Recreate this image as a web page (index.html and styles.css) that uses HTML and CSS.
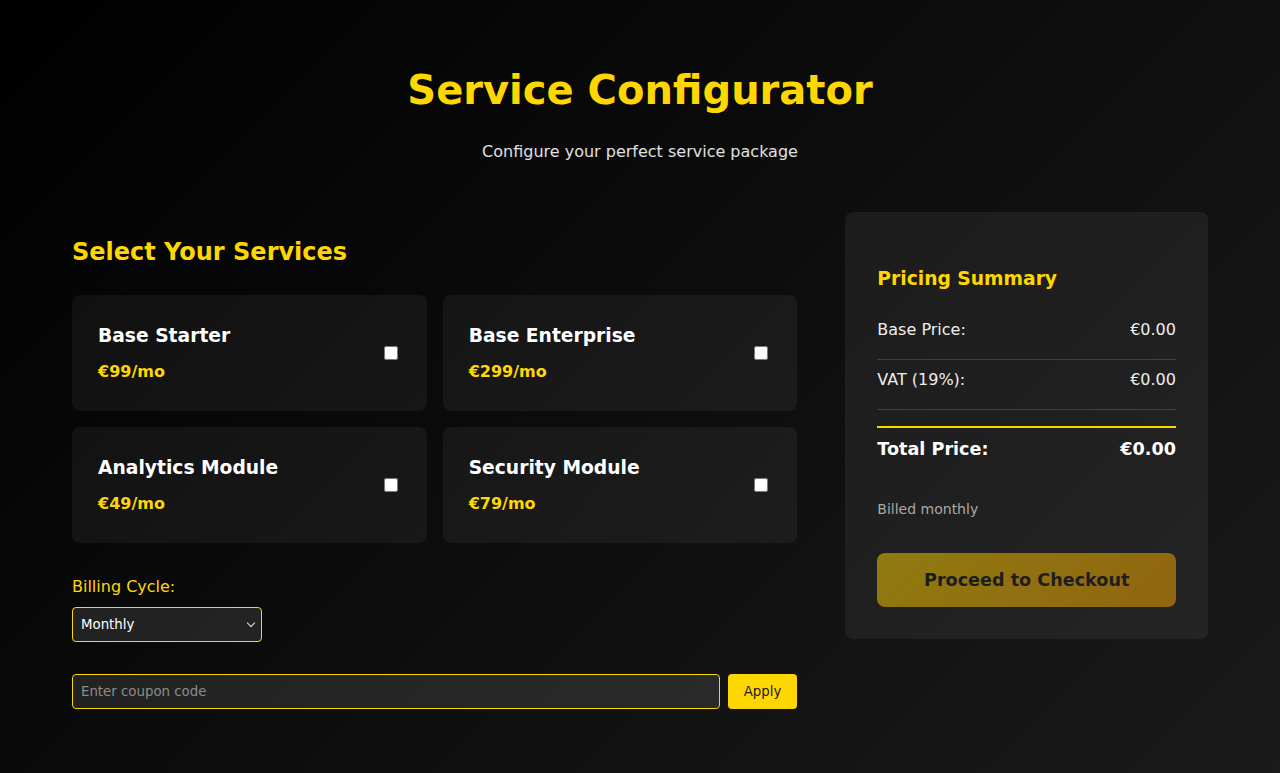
FILE: index.html
```html
<!DOCTYPE html>
<html lang="en">
<head>
<meta charset="utf-8">
<title>Service Configurator</title>
<link rel="stylesheet" href="styles.css">
</head>
<body>
<div class="container">
  <header class="header">
    <h1 class="title">Service Configurator</h1>
    <p class="subtitle">Configure your perfect service package</p>
  </header>
  <main class="layout">
    <section class="services">
      <h2 class="section-title">Select Your Services</h2>
      <div class="service-grid">
        <label class="service-card">
          <div class="service-info">
            <h3 class="service-name">Base Starter</h3>
            <div class="service-price">€99/mo</div>
          </div>
          <input type="checkbox" class="service-check">
        </label>
        <label class="service-card">
          <div class="service-info">
            <h3 class="service-name">Base Enterprise</h3>
            <div class="service-price">€299/mo</div>
          </div>
          <input type="checkbox" class="service-check">
        </label>
        <label class="service-card">
          <div class="service-info">
            <h3 class="service-name">Analytics Module</h3>
            <div class="service-price">€49/mo</div>
          </div>
          <input type="checkbox" class="service-check">
        </label>
        <label class="service-card">
          <div class="service-info">
            <h3 class="service-name">Security Module</h3>
            <div class="service-price">€79/mo</div>
          </div>
          <input type="checkbox" class="service-check">
        </label>
      </div>
      <div class="billing">
        <label class="billing-label" for="cycle">Billing Cycle:</label>
        <span class="select-wrap">
          <select id="cycle" class="billing-select">
            <option>Monthly</option>
            <option>Yearly</option>
          </select>
        </span>
      </div>
      <div class="coupon">
        <input type="text" class="coupon-input" placeholder="Enter coupon code">
        <button class="coupon-btn">Apply</button>
      </div>
    </section>
    <aside class="summary">
      <h3 class="summary-title">Pricing Summary</h3>
      <div class="summary-row">
        <span>Base Price:</span>
        <span>€0.00</span>
      </div>
      <div class="summary-row">
        <span>VAT (19%):</span>
        <span>€0.00</span>
      </div>
      <div class="summary-total">
        <span>Total Price:</span>
        <span>€0.00</span>
      </div>
      <p class="billed">Billed monthly</p>
      <button class="checkout-btn" disabled>Proceed to Checkout</button>
    </aside>
  </main>
</div>
</body>
</html>
```
FILE: styles.css
```css
* {
  box-sizing: border-box;
}

html, body {
  margin: 0;
  padding: 0;
}

body {
  min-height: 100vh;
  font-family: "DejaVu Sans", sans-serif;
  line-height: 1.6;
  color: #ffffff;
  background: linear-gradient(135deg, #000000 0%, #1a1a1a 100%);
}

.container {
  max-width: 1200px;
  margin: 0 auto;
  padding: 32px;
}

.header {
  text-align: center;
  padding-top: 34px;
}

.title {
  margin: 0;
  font-size: 40px;
  line-height: 48px;
  font-weight: bold;
  color: #ffd700;
}

.subtitle {
  margin: 25px 0 0;
  font-size: 16px;
  color: #e0e0e0;
}

.layout {
  display: grid;
  grid-template-columns: 2fr 1fr;
  gap: 48px;
  align-items: start;
  margin-top: 47px;
}

.section-title {
  margin: 26px 0 29px;
  font-size: 24px;
  line-height: 28.8px;
  color: #ffd700;
}

.service-grid {
  display: grid;
  grid-template-columns: 1fr 1fr;
  gap: 16px;
}

.service-card {
  display: flex;
  justify-content: space-between;
  align-items: center;
  padding: 24px;
  border: 2px solid transparent;
  border-radius: 8px;
  background: rgba(255, 255, 255, 0.05);
  cursor: pointer;
}

.service-name {
  margin: 0 0 8px;
  font-size: 18.7px;
  line-height: 30px;
  color: #ffffff;
}

.service-price {
  font-size: 16px;
  font-weight: bold;
  color: #ffd700;
}

.service-check {
  width: 14px;
  height: 14px;
  margin: 3px 3px 3px 4px;
}

.billing {
  margin-top: 31px;
}

.billing-label {
  display: block;
  margin-bottom: 8px;
  font-size: 16px;
  color: #ffd700;
}

.select-wrap {
  position: relative;
  display: inline-block;
  vertical-align: top;
}

.select-wrap::after {
  content: "";
  position: absolute;
  right: 8px;
  top: 13px;
  width: 5px;
  height: 5px;
  border-right: 1.5px solid #e8e8e8;
  border-bottom: 1.5px solid #e8e8e8;
  transform: rotate(45deg);
  pointer-events: none;
}

.billing-select {
  display: block;
  width: 190px;
  height: 35px;
  padding: 0 24px 0 8px;
  font-family: "DejaVu Sans", sans-serif;
  font-size: 13.333px;
  color: #ffffff;
  background: rgba(255, 255, 255, 0.1);
  border: 1px solid #ffd700;
  border-radius: 4px;
  appearance: none;
  -webkit-appearance: none;
}

.billing-select option {
  background: #222222;
}

.coupon {
  display: flex;
  gap: 8px;
  margin-top: 32px;
}

.coupon-input {
  flex: 1;
  height: 35px;
  padding: 0 8px;
  font-family: "DejaVu Sans", sans-serif;
  font-size: 13.333px;
  color: #ffffff;
  background: rgba(255, 255, 255, 0.1);
  border: 1px solid #ffd700;
  border-radius: 4px;
}

.coupon-input::placeholder {
  color: #8c8c8c;
}

.coupon-btn {
  height: 35px;
  padding: 0 16px;
  font-family: "DejaVu Sans", sans-serif;
  font-size: 13.333px;
  color: #1a1a1a;
  background: #ffd700;
  border: none;
  border-radius: 4px;
  cursor: pointer;
}

.summary {
  padding: 32px;
  border-radius: 8px;
  background: rgba(255, 255, 255, 0.06);
}

.summary-title {
  margin: 20px 0 23px;
  font-size: 18.7px;
  line-height: 30px;
  color: #ffd700;
}

.summary-row {
  display: flex;
  justify-content: space-between;
  padding-bottom: 17px;
  margin-bottom: 7px;
  font-size: 16px;
  line-height: 25px;
  color: #eeeeee;
  border-bottom: 1px solid rgba(255, 215, 0, 0.2);
}

.summary-total {
  display: flex;
  justify-content: space-between;
  margin-top: 16px;
  padding-top: 7px;
  font-size: 17.6px;
  font-weight: bold;
  border-top: 2px solid #ffd700;
}

.billed {
  margin: 35px 0 0;
  font-size: 14px;
  color: #aaaaaa;
}

.checkout-btn {
  display: block;
  width: 100%;
  margin-top: 33px;
  padding: 16px;
  font-family: "DejaVu Sans", sans-serif;
  font-size: 17.6px;
  line-height: 22px;
  font-weight: bold;
  color: #1a1a1a;
  background: linear-gradient(135deg, #ffd700 0%, #ffa500 100%);
  border: none;
  border-radius: 8px;
  opacity: 0.5;
}
```
